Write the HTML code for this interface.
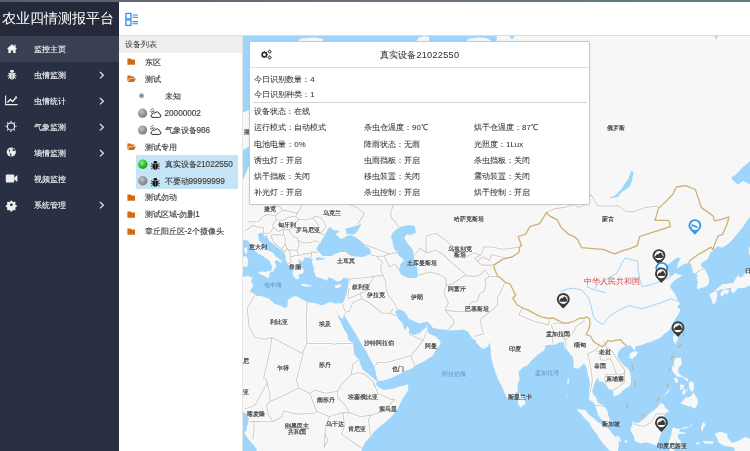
<!DOCTYPE html>
<html><head><meta charset="utf-8">
<style>
*{margin:0;padding:0;box-sizing:border-box}
html,body{width:750px;height:451px;overflow:hidden;background:#fff;font-family:"Liberation Sans",sans-serif}
.abs{position:absolute}
#topline{left:0;top:0;width:750px;height:2px;background:linear-gradient(90deg,#585e6c,#6b7380 50%,#627b82)}
#side{left:0;top:2px;width:119px;height:449px;background:#2a3043}
#brand{left:0;top:2px;width:119px;height:34px;background:#252a3a;color:#fff;font-size:14.2px;line-height:33.4px;padding-left:2px;white-space:nowrap}
.mi{position:absolute;left:0;width:119px;height:26px;color:#f4f4f8;font-size:8px;line-height:26px;-webkit-text-stroke:0.12px #f4f4f8}
.mi .t{position:absolute;left:34px;top:0.5px}
.mi svg{position:absolute;left:0;top:0}
.mi.act{background:#3a4054}
#header{left:119px;top:2px;width:631px;height:34px;background:#fff;border-bottom:1px solid #dcdcdc}
#tree{left:119px;top:36px;width:124px;height:415px;background:#fff;border-right:1px solid #e6e6e6}
#treeh{left:119px;top:36px;width:123px;height:17px;background:#eeeeee;color:#333;font-size:7.8px;line-height:17px;padding-left:6px}
.tr{position:absolute;height:17px;line-height:17px;font-size:8.2px;color:#404040;white-space:nowrap;-webkit-text-stroke:0.15px #404040}
.tr.hi{top:0}
#map{left:243px;top:36px;width:507px;height:415px;background:#f7f7f7;overflow:hidden}
#pop{left:249px;top:41px;width:341px;height:164px;background:#fff;border:1px solid #c9c9c9;border-radius:2px;box-shadow:0 0 2px rgba(0,0,0,.08)}
.pt{position:absolute;font-size:7.9px;color:#333;white-space:nowrap;line-height:10px;-webkit-text-stroke:0.05px #333}
.ico{position:absolute}
</style></head>
<body>
<div id="root" style="position:absolute;left:0;top:0;width:750px;height:451px;will-change:transform">
<div id="topline" class="abs"></div>
<div id="side" class="abs"></div>
<div class="abs" style="left:113px;top:36px;width:6px;height:415px;background:#263040"></div>
<div id="brand" class="abs">农业四情测报平台</div>
<div class="mi act" style="top:36px">
<svg width="30" height="26" viewBox="0 0 30 26"><path d="M7.2,12.6L12,8.2L16.8,12.6L15.8,13.6L15.6,13.4V17H13.2V14.6H10.8V17H8.4V13.4L8.2,13.6Z" fill="#f2f2f2"/><rect x="14.2" y="8.8" width="1.4" height="2.6" fill="#f2f2f2"/></svg>
<span class="t">监控主页</span></div>
<div class="mi" style="top:62px">
<svg width="30" height="26" viewBox="0 0 30 26"><ellipse cx="12" cy="9.3" rx="2" ry="1.5" fill="#eee"/><path d="M9.3,11h5.4v3.5a2.7,3 0 0 1-5.4,0Z" fill="#eee"/><path d="M8.2,11.2L9.6,12M15.8,11.2L14.4,12M7.6,13.6H9.4M16.4,13.6H14.6M8,16.4L9.6,15.2M16,16.4L14.4,15.2" stroke="#eee" stroke-width="1"/><path d="M12,11.3V17.2" stroke="#2a3043" stroke-width="0.6"/></svg>
<span class="t">虫情监测</span><svg width="119" height="26" viewBox="0 0 119 26"><path d="M100,10L103.4,13.2L100,16.4" fill="none" stroke="#e0e0e6" stroke-width="1.3"/></svg></div>
<div class="mi" style="top:88px">
<svg width="30" height="26" viewBox="0 0 30 26"><path d="M5.6,7.4V16.6H17.6" fill="none" stroke="#e8e8e8" stroke-width="1.1"/><path d="M7.4,14.6L10.4,11.4L12.6,13.4L16.4,9.2" fill="none" stroke="#eee" stroke-width="1.4"/><path d="M14.8,8.6H17V10.8Z" fill="#eee"/></svg>
<span class="t">虫情统计</span><svg width="119" height="26" viewBox="0 0 119 26"><path d="M100,10L103.4,13.2L100,16.4" fill="none" stroke="#e0e0e6" stroke-width="1.3"/></svg></div>
<div class="mi" style="top:114px">
<svg width="30" height="26" viewBox="0 0 30 26"><circle cx="11" cy="12.4" r="3.6" fill="none" stroke="#eee" stroke-width="1.2"/><path d="M11,6.9V8M11,16.8V17.9M5.5,12.4H6.6M15.4,12.4H16.5M7.1,8.5L7.9,9.3M14.1,15.5L14.9,16.3M7.1,16.3L7.9,15.5M14.1,9.3L14.9,8.5" stroke="#eee" stroke-width="1.2"/></svg>
<span class="t">气象监测</span><svg width="119" height="26" viewBox="0 0 119 26"><path d="M100,10L103.4,13.2L100,16.4" fill="none" stroke="#e0e0e6" stroke-width="1.3"/></svg></div>
<div class="mi" style="top:140px">
<svg width="30" height="26" viewBox="0 0 30 26"><circle cx="11.3" cy="12" r="4.6" fill="#eee"/><path d="M8.6,9.6C10,9 10.6,10.6 9.8,11.4C9,12.2 10.6,13.4 11.4,14.2C12,15 11.4,16.4 10.6,16.5M12.6,8C13.6,9 14.8,9.4 15.4,10.6C14.4,11 13.2,10.6 12.8,11.6" fill="#2a3043"/></svg>
<span class="t">墒情监测</span><svg width="119" height="26" viewBox="0 0 119 26"><path d="M100,10L103.4,13.2L100,16.4" fill="none" stroke="#e0e0e6" stroke-width="1.3"/></svg></div>
<div class="mi" style="top:166px">
<svg width="30" height="26" viewBox="0 0 30 26"><rect x="5.8" y="8.6" width="8.4" height="7.8" rx="1" fill="#eee"/><path d="M14.2,11.4L17.4,9V16L14.2,13.6Z" fill="#eee"/></svg>
<span class="t">视频监控</span></div>
<div class="mi" style="top:192px">
<svg width="30" height="26" viewBox="0 0 30 26"><g transform="translate(11.3,12.8) scale(0.86)"><path d="M-1,-4.8h2l0.4,1.3l1.2,0.5l1.2,-0.7l1.4,1.4l-0.7,1.2l0.5,1.2l1.3,0.4v2l-1.3,0.4l-0.5,1.2l0.7,1.2l-1.4,1.4l-1.2,-0.7l-1.2,0.5l-0.4,1.3h-2l-0.4,-1.3l-1.2,-0.5l-1.2,0.7l-1.4,-1.4l0.7,-1.2l-0.5,-1.2l-1.3,-0.4v-2l1.3,-0.4l0.5,-1.2l-0.7,-1.2l1.4,-1.4l1.2,0.7l1.2,-0.5Z" fill="#eee"/><circle r="1.6" fill="#2a3043"/></g></svg>
<span class="t">系统管理</span><svg width="119" height="26" viewBox="0 0 119 26"><path d="M100,10L103.4,13.2L100,16.4" fill="none" stroke="#e0e0e6" stroke-width="1.3"/></svg></div>

<div id="header" class="abs"></div>
<svg class="ico" style="left:124px;top:11px" width="16" height="16" viewBox="0 0 16 16"><rect x="1.9" y="2.4" width="5" height="5.4" fill="none" stroke="#3d8ded" stroke-width="1.3"/><rect x="1.9" y="9" width="5" height="5.4" fill="none" stroke="#3d8ded" stroke-width="1.3"/><path d="M8.4,4H14M8.4,6.2H14M8.4,10.6H14M8.4,12.8H14" stroke="#3d8ded" stroke-width="1.1"/></svg>

<div id="tree" class="abs"></div>
<div id="treeh" class="abs">设备列表</div>
<svg class="ico" style="left:119px;top:53px" width="124" height="190" viewBox="0 0 124 190">
<defs>
<radialGradient id="gg" cx="40%" cy="35%" r="65%"><stop offset="0" stop-color="#c4c4c4"/><stop offset="0.7" stop-color="#8e8e8e"/><stop offset="1" stop-color="#7a7a7a"/></radialGradient>
<radialGradient id="gr" cx="40%" cy="35%" r="65%"><stop offset="0" stop-color="#8ff08f"/><stop offset="0.6" stop-color="#2fc12f"/><stop offset="1" stop-color="#1f9a1f"/></radialGradient>
<radialGradient id="gm" cx="50%" cy="50%" r="50%"><stop offset="0" stop-color="#546a78"/><stop offset="0.6" stop-color="#9ab4c8"/><stop offset="1" stop-color="#dfe8ef"/></radialGradient>
<g id="fc"><path d="M8.4,5.6H11.6L12.6,6.6H16V11.8H8.4Z" fill="#d46a12"/></g>
<g id="fo"><path d="M8.4,5.6H11.6L12.6,6.6H15.2V8H10.4L8.4,11.4Z" fill="#d46a12"/><path d="M10.8,8.6H17L15,12H8.8Z" fill="#d46a12"/></g>
<g id="cl" fill="none" stroke="#1a1a1a" stroke-width="0.9"><path d="M32,5.2L32.7,6M33.9,4.2V5.2M31.2,7.3H32.2"/><path d="M32.6,8.6a1.9,1.9 0 0 1 3-1.3"/><path d="M33,13.4H40.2a1.6,1.6 0 0 0 0.2-3.2a2.4,2.4 0 0 0-4.6-0.9a1.7,1.7 0 0 0-2.8,1.2a1.5,1.5 0 0 0 0.2,2.9Z"/></g>
<g id="bug"><ellipse cx="36.3" cy="7.3" rx="1.8" ry="1.3" fill="#111"/><path d="M33.8,8.8h5v3.2a2.5,2.8 0 0 1-5,0Z" fill="#111"/><path d="M32.2,8.6L33.8,9.6M40.4,8.6L38.8,9.6M31.8,11.2H33.8M40.8,11.2H38.8M32.2,14L33.8,12.8M40.4,14L38.8,12.8" stroke="#111" stroke-width="0.9"/><path d="M36.3,9V14.3" stroke="#d0d0d0" stroke-width="0.5"/></g>
</defs>
<use href="#fc" y="0"/>
<use href="#fo" y="17"/>
<circle cx="22.6" cy="42.8" r="3" fill="url(#gm)"/>
<circle cx="23.6" cy="60.2" r="4.6" fill="url(#gg)"/><use href="#cl" y="51"/>
<circle cx="23.6" cy="77" r="4.6" fill="url(#gg)"/><use href="#cl" y="68"/>
<use href="#fo" y="85"/>
<rect x="17" y="102" width="102" height="34" fill="#c5e4f5"/>
<circle cx="23.8" cy="111.2" r="4.7" fill="url(#gr)"/><use href="#bug" y="102"/>
<circle cx="23.8" cy="127.7" r="4.7" fill="url(#gg)"/><use href="#bug" y="119"/>
<use href="#fc" y="136"/>
<use href="#fc" y="153"/>
<use href="#fc" y="170"/>
</svg>
<div class="tr" style="left:144.5px;top:54px">东区</div>
<div class="tr" style="left:144.5px;top:70.5px">测试</div>
<div class="tr" style="left:164.5px;top:87.5px">未知</div>
<div class="tr" style="left:164.5px;top:104.5px">20000002</div>
<div class="tr" style="left:164.5px;top:121.5px">气象设备986</div>
<div class="tr" style="left:144.5px;top:138.5px">测试专用</div>
<div class="tr" style="left:164.5px;top:155.5px">真实设备21022550</div>
<div class="tr" style="left:164.5px;top:172.5px">不要动99999999</div>
<div class="tr" style="left:144.5px;top:188.7px">测试勿动</div>
<div class="tr" style="left:144.5px;top:205.6px">测试区域-勿删1</div>
<div class="tr" style="left:144.5px;top:223.2px">章丘阳丘区-2个摄像头</div>

<div id="map" class="abs"><svg width="507" height="415" viewBox="0 0 507 415" style="position:absolute;left:0;top:0" font-family="Liberation Sans">
<rect width="507" height="415" fill="#f7f7f7"/>
<g fill="#9fd5fb" stroke="none">
<path d="M118.4,425.2L118.8,412.0L120.4,409.9L121.9,406.6L125.0,403.2L127.3,400.8L131.1,395.8L136.9,390.5L141.9,386.6L148.5,380.8L154.2,373.7L159.2,363.4L163.1,357.6L165.4,354.1L165.0,348.6L156.9,350.5L150.4,352.5L140.8,354.1L135.4,350.9L133.4,349.3L132.3,348.6L134.2,345.8L131.9,343.8L125.4,337.9L119.6,333.5L118.1,329.9L115.7,323.9L110.7,317.4L110.7,311.6L109.6,307.5L105.0,303.3L104.6,299.1L100.7,292.8L97.7,285.5L95.7,282.0L92.9,273.6L93.8,277.6L99.4,283.3L100.7,279.8L102.3,275.4L101.5,279.8L104.2,284.2L108.1,290.6L113.4,299.1L118.1,307.5L123.4,315.7L127.7,323.9L131.1,329.9L132.7,335.9L133.8,341.9L135.0,345.0L140.8,344.6L148.5,341.9L156.5,337.9L161.9,335.1L168.5,333.1L173.5,328.7L175.4,327.9L181.2,325.5L185.4,322.6L190.0,319.8L192.7,313.7L196.6,309.5L197.7,305.4L193.1,300.8L185.8,297.4L184.4,294.5L184.2,288.9L183.1,291.5L180.4,293.6L176.9,297.0L171.5,298.7L167.7,299.1L165.8,297.0L166.2,293.6L164.6,290.0L163.1,292.8L162.3,294.9L160.4,290.6L160.4,288.5L158.5,286.3L154.6,282.0L152.7,277.6L152.3,275.8L154.2,273.6L156.2,273.2L161.2,275.4L163.1,278.0L165.8,282.8L171.5,285.5L177.3,287.6L181.2,286.3L184.2,285.5L187.3,288.5L190.0,292.1L196.6,293.2L200.8,293.6L207.3,294.5L216.2,294.0L220.4,293.6L225.0,295.7L227.7,300.0L230.4,303.3L231.6,304.1L233.1,305.0L233.0,306.6L235.4,309.1L238.5,312.0L240.8,312.8L244.7,310.8L247.0,306.2L247.3,311.2L247.9,314.1L247.9,319.8L249.7,327.9L251.6,333.9L255.4,344.2L259.3,350.7L261.0,355.6L263.7,361.5L266.0,363.1L268.3,360.3L272.0,358.4L274.9,354.4L274.7,348.2L276.6,343.4L275.6,335.9L278.5,332.7L280.1,331.1L284.3,329.5L288.1,325.1L294.3,319.0L297.8,316.5L301.2,314.5L302.4,309.5L307.0,308.7L312.0,308.7L316.2,306.6L320.8,306.2L321.6,310.0L325.1,315.3L330.1,321.8L330.9,329.9L330.1,331.9L335.1,332.7L338.2,329.9L340.9,327.9L343.2,329.9L344.7,337.9L347.0,346.2L346.6,355.6L345.9,363.4L351.2,367.3L353.6,373.5L355.1,378.9L357.8,382.7L361.1,385.8L365.9,388.9L367.8,389.3L368.9,388.5L367.4,385.1L365.3,379.7L364.3,373.9L361.1,370.4L357.4,367.7L354.7,366.5L353.2,361.5L349.7,357.6L349.3,353.7L352.2,345.8L354.3,342.1L355.9,343.4L355.9,345.4L358.9,345.4L362.4,347.8L363.9,350.1L365.9,353.3L369.7,354.1L370.9,361.1L377.4,357.6L379.7,354.4L383.6,352.1L387.0,349.7L387.8,346.8L388.0,340.7L386.6,335.1L384.1,331.5L381.6,329.9L377.8,325.9L374.5,321.0L375.1,316.5L378.2,312.4L383.2,309.5L387.4,309.5L389.7,312.0L391.6,314.9L392.4,310.8L396.7,309.5L401.7,307.9L404.3,306.6L407.0,306.2L412.0,304.1L416.7,302.1L422.0,297.4L426.7,294.0L428.0,290.6L430.1,286.3L432.8,282.0L435.1,278.9L436.7,275.4L437.4,273.2L434.0,271.4L436.9,267.4L434.7,264.2L432.8,259.6L428.6,253.2L427.1,251.3L427.8,248.5L430.9,245.1L435.5,241.8L439.7,238.9L434.7,238.2L432.2,237.0L429.0,239.9L426.3,240.4L426.3,237.0L421.7,234.5L420.5,231.1L423.6,229.6L427.8,226.6L432.8,222.5L434.0,221.5L437.8,222.5L435.1,227.1L434.0,232.5L435.9,231.6L440.1,228.6L445.9,226.8L448.2,228.6L449.4,232.5L449.8,237.4L451.3,236.5L454.8,238.7L453.6,241.8L454.8,246.1L454.0,251.5L454.4,253.2L459.0,251.8L464.0,250.1L465.5,248.0L466.1,245.6L465.5,240.8L463.8,237.2L461.5,233.0L458.0,230.3L458.6,227.1L464.8,223.1L467.1,216.9L470.1,214.3L475.2,210.1L479.0,211.7L485.2,208.0L490.2,202.7L494.8,197.2L499.4,191.7L503.2,186.0L506.3,181.4L544.8,181.4L544.8,425.2Z"/>
<path d="M-13.2,203.7L1.8,203.7L5.3,204.8L7.2,208.0L8.0,211.2L13.0,215.4L14.9,217.4L19.9,220.0L22.2,222.0L24.6,223.1L27.2,226.1L29.2,231.1L27.8,235.5L29.6,236.5L31.1,233.5L33.4,230.6L31.5,225.6L33.8,223.8L38.2,227.1L38.8,225.3L36.7,223.1L32.6,220.5L29.9,216.4L22.2,213.3L19.5,207.5L16.1,204.8L14.9,197.8L20.5,196.4L21.1,201.0L23.0,198.3L26.5,205.4L30.7,208.0L37.2,212.5L41.1,215.4L42.4,219.5L42.6,223.8L44.6,227.6L47.3,231.1L51.1,234.5L49.6,235.5L49.6,237.9L51.1,241.3L54.2,243.7L55.3,241.8L56.9,243.5L55.3,238.4L60.0,237.7L60.7,233.5L56.1,229.6L55.7,223.1L59.6,226.1L61.5,221.5L67.3,221.8L70.0,224.1L68.8,225.6L69.6,228.6L71.9,234.0L70.0,232.5L73.0,240.8L76.1,241.8L79.6,242.8L83.8,244.7L85.7,241.3L90.7,243.2L93.8,245.6L97.7,244.7L100.7,241.8L106.9,242.8L105.4,248.0L104.2,255.5L102.3,260.6L101.5,263.7L99.6,266.9L91.9,267.6L86.9,266.0L82.7,267.8L78.8,269.6L72.3,267.1L64.4,266.2L60.0,263.7L54.6,260.8L51.5,260.1L44.8,263.7L44.6,269.8L43.0,271.4L40.7,271.8L37.6,269.6L31.5,267.8L25.7,262.4L18.4,260.1L14.2,260.1L9.5,256.4L6.5,255.5L9.2,251.8L10.1,248.0L8.4,246.6L8.4,243.7L10.1,240.4L7.2,241.8L5.7,239.4L1.5,240.8L-13.2,240.8Z"/>
<path d="M85.7,191.7L81.9,198.9L77.8,205.4L75.0,209.6L73.4,213.3L79.6,220.0L88.4,220.0L91.9,217.9L97.5,216.0L102.9,215.9L107.3,219.5L111.9,220.5L120.4,221.0L127.7,217.9L127.9,215.1L125.4,210.7L120.4,207.5L113.1,201.6L108.4,198.9L103.8,200.0L98.4,203.2L96.5,202.1L92.7,198.0L96.9,195.0L90.7,193.9L88.8,192.8L86.9,191.1Z"/>
<path d="M108.4,198.3L103.8,198.3L102.3,192.8L111.9,190.3L118.4,187.7L115.0,194.5L111.9,198.3Z"/>
<path d="M151.5,195.0L156.9,191.1L165.8,188.9L171.9,190.0L172.7,196.7L167.7,198.9L163.8,198.3L161.2,202.1L164.6,207.5L169.6,213.3L170.8,218.5L171.5,226.1L173.9,231.1L175.0,239.4L173.5,241.8L165.8,242.3L158.5,238.9L155.8,234.0L157.3,228.6L161.2,224.1L156.5,220.0L153.1,215.9L150.4,210.7L149.6,205.4L148.1,201.6L149.2,197.2Z"/>
<path d="M-13.2,373.1L1.5,376.6L4.2,378.9L5.7,382.7L5.3,386.6L4.2,390.5L3.4,394.3L1.3,396.6L3.0,400.1L6.1,403.9L9.5,407.8L13.4,412.8L15.7,425.2L-13.2,425.2Z"/>
<path d="M73.4,221.3L82.7,222.3L79.6,223.8L72.7,224.3Z"/>
<path d="M0.0,-6.0L250.0,-6.0L250.0,5.5L0.0,5.5Z"/>
<path d="M249.0,0.0L254.0,0.0L253.5,5.5L249.0,5.5Z"/>
<path d="M266.0,0.0L272.0,0.0L269.0,3.5Z"/>
<path d="M0.0,0.0L8.0,0.0L8.0,73.0L0.0,76.5Z"/>
<path d="M0.0,114.0L8.0,109.5L8.0,124.0L5.0,132.0L0.0,144.0Z"/>
<path d="M468.0,-6.0L477.0,-6.0L473.5,3.5Z"/>
</g>
<g fill="#f7f7f7">
<path d="M54.0,5.5L58.0,2.5L65.0,2.0L72.0,1.5L80.0,3.0L80.0,5.5Z"/>
<path d="M173.0,5.5L176.0,1.5L181.0,0.0L186.0,1.0L186.0,5.5Z"/>
<path d="M223.0,5.5L226.0,2.5L235.0,1.5L243.0,2.0L250.0,5.5Z"/>
<path d="M471.5,255.3L473.2,253.2L476.7,250.3L479.4,248.0L484.0,248.0L487.8,247.0L489.0,248.0L491.3,245.1L493.6,241.3L495.9,238.4L495.9,241.8L499.4,240.8L502.7,236.5L507.1,233.5L508.6,226.1L509.4,220.0L511.3,218.5L514.0,236.0L510.2,250.3L505.6,249.9L503.2,250.8L501.7,252.2L499.4,251.8L495.5,252.2L494.4,252.2L494.0,253.6L490.2,257.6L487.5,254.1L488.6,252.2L487.8,251.8L481.3,253.2L477.3,253.4L474.4,255.3Z"/>
<path d="M471.3,255.3L469.4,256.9L467.5,257.3L466.3,258.7L467.3,260.8L468.6,263.7L470.1,268.7L472.1,266.9L473.4,264.7L474.0,258.7L474.4,256.9Z"/>
<path d="M485.5,254.1L485.9,255.9L484.0,258.5L481.3,257.3L479.4,260.8L477.1,258.3L478.2,255.7L481.3,253.6Z"/>
<path d="M506.3,218.5L505.6,213.3L507.9,209.1L513.6,197.2L525.6,205.4L517.9,215.9Z"/>
<path d="M435.1,293.6L436.5,297.0L434.7,303.3L432.6,307.9L430.5,305.4L429.9,301.2L432.1,297.0L433.2,294.5Z"/>
<path d="M392.8,315.3L394.7,316.1L393.2,319.8L389.0,323.0L385.9,321.4L387.0,317.4L389.7,315.7Z"/>
<path d="M432.8,321.8L437.8,321.8L439.0,327.9L435.5,331.9L435.1,335.9L438.6,339.9L445.1,343.0L445.1,345.4L442.8,344.2L440.9,341.9L436.7,340.7L434.0,340.7L431.7,337.9L430.5,336.7L429.0,333.9L429.0,330.3L430.7,330.7L430.9,325.5Z"/>
<path d="M430.5,341.9L434.4,341.9L435.1,346.6L433.2,347.0Z"/>
<path d="M445.9,345.4L450.1,345.8L451.3,351.7L449.4,355.6L447.4,355.2L445.9,350.5Z"/>
<path d="M437.1,348.2L441.7,349.3L439.0,353.7L437.1,353.7Z"/>
<path d="M440.9,351.7L442.4,353.7L441.7,358.7L438.6,357.6L440.1,354.4Z"/>
<path d="M444.8,350.9L442.4,357.6L444.4,354.8Z"/>
<path d="M427.8,350.5L425.1,356.4L419.4,361.5L418.6,362.2L422.0,358.4L425.5,354.1Z"/>
<path d="M450.5,356.4L454.8,363.4L454.8,367.3L453.2,371.2L450.1,372.7L449.0,370.8L444.8,370.0L437.1,367.3L440.5,364.2L442.4,361.5L446.7,361.1L448.6,359.5Z"/>
<path d="M417.4,367.3L414.4,371.2L410.1,375.0L406.3,377.4L402.4,382.0L396.3,386.2L392.0,388.1L389.3,388.5L387.4,394.3L390.9,400.1L392.0,405.5L397.8,407.4L402.4,406.2L408.2,407.8L414.0,410.1L415.9,403.9L417.4,399.3L419.7,392.4L425.1,390.5L421.7,386.6L421.3,378.1L426.3,375.0L422.0,371.2L420.5,367.7Z"/>
<path d="M334.3,372.7L342.8,374.3L346.2,378.9L350.5,382.0L355.5,386.6L362.0,390.1L367.0,394.3L369.7,398.1L375.1,403.9L375.9,407.4L374.7,417.4L370.1,417.4L365.1,413.2L361.3,408.9L355.9,402.0L353.7,398.1L349.3,392.4L346.2,386.6L342.0,382.7L337.8,377.4L334.3,374.3Z"/>
<path d="M372.4,400.1L376.3,400.5L378.6,405.9L374.7,404.3Z"/>
<path d="M381.6,404.3L384.3,404.7L384.0,406.6L381.6,406.6Z"/>
<path d="M449.4,388.9L446.7,390.8L442.8,392.8L433.2,392.4L430.1,391.2L428.6,394.3L428.6,397.8L425.1,407.8L427.1,415.5L430.9,415.5L433.2,404.3L435.1,409.7L437.1,413.6L440.9,411.6L438.2,405.9L434.7,401.2L435.1,398.1L442.1,397.8L442.4,396.6L436.3,395.8L437.1,392.4L446.7,390.5L448.6,388.1Z"/>
<path d="M460.1,385.8L462.8,388.5L460.1,392.4L459.8,396.2L457.8,392.4L458.6,389.7Z"/>
<path d="M471.7,397.8L477.5,395.8L484.0,397.8L484.8,402.0L489.0,407.0L496.7,404.3L502.5,400.8L506.3,402.8L544.8,402.8L544.8,425.2L494.8,425.2L490.9,411.6L481.3,409.7L475.5,406.6L474.8,403.5Z"/>
<path d="M460.1,405.1L470.9,405.5L469.8,407.8L461.3,407.4Z"/>
<path d="M452.4,406.2L457.1,406.6L454.8,408.9Z"/>
<path d="M325.1,341.5L326.0,345.4L324.7,349.7L324.3,345.8Z"/>
<path d="M324.5,358.4L325.5,359.5L324.7,361.1Z"/>
<path d="M276.2,356.4L280.4,361.5L282.8,367.3L277.7,371.6L274.9,368.1L275.1,361.5Z"/>
<path d="M27.6,234.7L25.7,242.3L22.4,240.6L16.1,237.7L15.7,236.0L19.2,235.5L21.5,236.0L26.1,234.8Z"/>
<path d="M3.0,220.0L5.3,223.6L4.5,230.6L0.3,231.1L-0.8,221.0Z"/>
<path d="M3.8,210.7L4.3,215.9L3.0,219.0L0.7,213.3Z"/>
<path d="M58.4,247.5L61.9,248.0L65.7,248.9L68.8,249.4L68.0,250.3L63.0,250.6L58.0,249.4Z"/>
<path d="M100.7,247.0L98.0,248.5L98.0,250.6L94.2,252.2L91.9,251.3L91.9,249.4L94.6,248.7L97.3,248.5Z"/>
</g>
<g fill="#9fd5fb">
<path d="M366.6,162.3L375.1,161.1L377.4,157.3L387.0,150.3L389.0,144.4L390.5,137.1L389.0,134.4L387.8,135.7L385.5,142.5L380.9,149.0L378.6,152.9L373.6,158.0L371.1,160.1L367.4,161.1Z"/>
<path d="M510.2,149.7L500.5,145.1L494.8,148.4L490.2,144.4L488.2,141.8L492.9,138.4L499.4,131.6L510.2,122.5Z"/>
</g>
<g fill="none" stroke="#9fd5fb" stroke-width="1">
<path d="M317.3,255.7L323.0,253.5L329.7,252.1L338.6,253.9L345.7,261.9L348.3,270.7L350.1,279.6L353.7,284.9L359.9,288.5L367.0,279.6L375.8,274.3L385.8,269.5L399.0,272.9L412.5,268.4L420.0,266.0L428.0,262.9L437.0,266.0"/>
<path d="M343.0,250.3L351.0,253.9L362.5,256.6"/>
<path d="M351.0,253.0L357.0,246.0L365.2,242.4L374.0,237.0L379.4,226.4L382.0,222.0L385.8,222.9L394.7,225.0L395.0,234.0L397.0,244.0L399.2,250.6L405.0,249.5L412.5,247.3L420.0,244.5L428.0,240.6"/>
</g>
<path d="M1.8,195.0L6.8,191.7L9.9,189.4L15.7,191.1L20.3,191.7L20.7,196.7M4.5,186.0L15.7,185.5L20.7,179.7L25.3,178.5L32.6,179.7L33.0,184.3L29.6,189.4L30.3,191.7L26.5,197.2L19.9,197.2M14.5,169.6L24.6,165.4L30.7,169.6L36.9,170.8L39.9,174.4L44.6,175.0L54.2,177.4L60.0,168.4L58.4,161.7M32.6,179.7L34.9,177.4L39.9,174.4M34.2,184.3L39.9,184.3L45.3,181.4L52.6,180.3L54.2,177.4M52.6,180.3L55.7,183.2L49.2,191.7L45.7,193.9L39.9,193.4L35.3,195.6L30.3,191.1M28.0,198.9L40.7,198.9L42.6,203.7L41.9,208.0L38.8,212.8L35.3,210.7L30.3,205.4L28.4,201.0L28.0,198.9M39.9,193.4L40.7,198.9M45.7,193.9L49.9,200.0L54.2,202.1L54.9,204.3L56.1,209.6L53.8,214.3M41.9,208.0L44.6,213.3L48.4,214.3L53.8,214.3M38.8,212.8L41.9,215.9L43.8,212.8L46.9,215.4L47.3,221.0L48.4,226.1L44.9,228.1M47.3,221.0L52.3,219.5L55.7,219.5L61.9,217.9L67.6,217.4L68.8,217.4L68.0,222.0M53.8,214.3L55.7,219.5M54.9,204.3L60.0,207.0L67.6,206.4L72.7,204.8L77.7,207.0M67.6,215.9L73.4,216.4L75.3,215.9M55.7,183.2L63.4,183.8L70.0,182.0L75.3,188.9L76.1,197.2L81.9,198.9M70.0,182.0L71.5,180.3L77.3,181.4L81.1,186.0L83.0,191.1L77.3,197.2M58.4,161.7L67.6,162.3L77.3,159.8L85.0,162.9L90.0,158.6L98.0,157.3L106.1,168.4L113.8,171.4L121.5,177.4L116.9,184.9L114.6,188.3M148.5,139.8L147.7,159.2L150.4,168.4L147.7,177.4L148.5,182.0L152.3,186.0L156.2,191.7M121.5,208.5L133.1,212.8L146.5,217.9L154.6,216.4M127.3,218.5L133.8,220.5L135.8,223.1L140.0,226.6L137.7,229.6L138.1,234.5L140.0,239.4L130.8,240.4L121.5,241.8L113.8,242.3L108.4,242.8L105.7,245.6M133.8,220.5L140.8,220.0L146.5,217.9M140.8,220.0L143.8,225.1L146.5,231.1L151.9,227.6L155.8,234.0M140.0,239.4L142.7,245.6L143.1,253.2L145.4,259.6L151.1,266.5L154.2,273.2M130.8,240.4L126.9,247.5L125.4,253.2L116.9,257.8L118.8,262.8L127.3,267.8L139.6,277.2L146.5,277.2L153.8,279.8M146.5,277.2L150.4,272.7M116.9,257.8L105.4,262.8L104.6,261.0M106.1,252.2L105.4,258.3L103.0,259.6M118.8,262.8L110.0,266.5L106.1,275.4L102.3,276.3M99.4,267.4L101.9,275.4M132.3,330.3L134.6,326.3L142.7,326.7L167.7,319.8L171.9,329.5M167.7,319.8L180.0,304.6L166.2,298.3M180.0,304.6L182.3,299.1L184.2,294.5M171.2,219.5L177.3,212.2L183.1,216.9L183.1,200.0L193.1,197.2L204.3,205.4L206.2,207.5L224.3,220.5L231.2,216.4L237.0,219.5L240.0,214.8L240.8,210.7L250.4,211.2L260.0,213.3L276.2,211.2M175.0,239.4L186.9,236.0L196.6,238.4L203.1,242.8L203.1,249.4M203.1,249.4L210.0,247.5L216.2,243.2L220.0,240.4L223.5,239.4M183.1,216.9L192.7,214.3L200.4,218.5L208.1,226.1L215.8,232.5L223.5,239.4M203.1,249.4L200.8,257.3L205.4,266.9L201.9,274.1M201.9,274.1L211.9,275.4L222.7,275.8L228.1,266.5L234.3,264.7L237.0,257.3L241.2,255.0L243.1,248.0L241.6,243.2L246.6,240.8L255.8,240.4M223.5,239.4L228.5,240.4L235.0,239.9L238.1,237.9L242.0,234.0L246.6,240.8M250.8,229.1L238.9,229.1L234.3,225.1L240.0,221.0L246.6,224.6L248.5,218.5L254.3,220.0L262.0,222.0L269.3,221.0M234.3,225.1L231.6,222.0L237.0,219.5M201.9,274.1L210.8,284.2L210.8,288.0L204.6,294.0M262.0,246.1L258.1,255.0L254.3,261.9L254.7,268.7L250.0,273.2L238.9,282.0L237.0,286.3L240.8,297.8L231.6,300.4M279.3,271.8L275.8,278.9L290.4,285.0L305.5,288.9L306.6,282.4M310.1,287.2L321.6,287.2M308.1,288.5L310.1,294.0L309.3,301.2L310.1,307.5M322.4,295.3L319.7,300.8L322.4,304.1L322.8,310.0L322.8,312.8M322.4,304.1L329.3,297.8L333.2,290.6L341.6,284.2M356.6,309.1L352.8,314.1L344.7,317.8L346.6,325.9L347.8,331.9L349.3,343.8L348.2,351.7L347.0,355.6M352.8,314.1L357.0,317.4L357.4,323.9L362.4,324.3L367.4,322.6L370.5,329.9L373.6,338.3L363.9,338.3L361.6,342.3L362.4,347.8M360.9,305.4L363.9,311.6L369.7,315.7L372.8,321.4L377.4,327.9L381.6,333.9L381.6,337.1L381.6,345.8L377.0,349.7L374.3,352.1L369.7,354.1M373.6,338.3L377.4,339.1L381.6,337.1M352.0,369.6L356.2,369.2L360.5,370.8M421.3,378.1L413.2,377.7L408.2,386.6L400.5,390.5L393.2,388.9L389.3,386.6M303.7,176.3L312.0,172.6L321.6,171.4L331.2,168.4L335.1,171.4L342.8,168.4L348.2,158.6L354.3,169.6L363.9,170.2L375.1,169.6L383.2,175.6L390.9,175.6L402.4,171.4L414.0,170.2L415.5,172.4M452.8,237.4L456.3,234.5L461.3,233.0M64.2,266.0L63.4,277.6L63.8,307.5L88.4,307.5L90.7,308.3L95.4,307.5L109.6,307.5M63.8,307.5L60.0,315.7L60.0,317.8L28.8,301.6L21.5,303.3L11.9,301.2L6.1,290.6L4.2,272.3L11.9,258.7M60.0,317.8L56.1,333.1L53.4,343.8L55.7,352.1L40.7,359.5L27.2,365.4M28.8,301.6L27.2,313.7L20.7,341.9L23.4,343.8L26.5,355.6L27.2,365.4M55.7,352.1L66.9,357.6L71.5,354.1L83.0,357.2L94.6,355.2L98.8,347.8L108.1,338.7L110.0,327.9L116.1,323.9M108.1,338.7L113.8,336.7L121.5,337.9L130.4,345.8L132.7,351.7L135.0,357.6L148.1,363.4L151.9,363.4L140.8,375.0L128.8,378.9L125.4,383.5L127.7,400.5M132.7,351.7L131.1,349.7L130.4,345.8M128.8,378.9L117.7,380.8L106.1,376.6L102.3,369.2L94.6,361.5L94.6,355.2M106.1,376.6L100.0,376.6L101.5,390.5L98.4,398.1L118.4,412.0M100.0,376.6L94.6,378.1L86.5,380.8L83.0,388.5L81.9,398.1L81.1,411.6M86.5,380.8L73.4,375.0L73.0,377.0L54.2,378.1L40.7,375.0L38.8,380.8L29.9,385.8L18.8,385.8L11.1,385.4L5.3,385.8M66.9,357.6L73.4,375.0M27.2,365.4L23.4,369.2L25.3,378.9L29.9,385.8M23.4,343.8L23.8,347.8L19.5,355.6L11.9,369.2L2.2,373.1M11.1,385.8L11.1,390.5L9.9,403.9M81.9,398.1L85.0,403.9L81.1,411.6" fill="none" stroke="#ffffff" stroke-width="2.4" stroke-linejoin="round"/>
<path d="M1.8,195.0L6.8,191.7L9.9,189.4L15.7,191.1L20.3,191.7L20.7,196.7M4.5,186.0L15.7,185.5L20.7,179.7L25.3,178.5L32.6,179.7L33.0,184.3L29.6,189.4L30.3,191.7L26.5,197.2L19.9,197.2M14.5,169.6L24.6,165.4L30.7,169.6L36.9,170.8L39.9,174.4L44.6,175.0L54.2,177.4L60.0,168.4L58.4,161.7M32.6,179.7L34.9,177.4L39.9,174.4M34.2,184.3L39.9,184.3L45.3,181.4L52.6,180.3L54.2,177.4M52.6,180.3L55.7,183.2L49.2,191.7L45.7,193.9L39.9,193.4L35.3,195.6L30.3,191.1M28.0,198.9L40.7,198.9L42.6,203.7L41.9,208.0L38.8,212.8L35.3,210.7L30.3,205.4L28.4,201.0L28.0,198.9M39.9,193.4L40.7,198.9M45.7,193.9L49.9,200.0L54.2,202.1L54.9,204.3L56.1,209.6L53.8,214.3M41.9,208.0L44.6,213.3L48.4,214.3L53.8,214.3M38.8,212.8L41.9,215.9L43.8,212.8L46.9,215.4L47.3,221.0L48.4,226.1L44.9,228.1M47.3,221.0L52.3,219.5L55.7,219.5L61.9,217.9L67.6,217.4L68.8,217.4L68.0,222.0M53.8,214.3L55.7,219.5M54.9,204.3L60.0,207.0L67.6,206.4L72.7,204.8L77.7,207.0M67.6,215.9L73.4,216.4L75.3,215.9M55.7,183.2L63.4,183.8L70.0,182.0L75.3,188.9L76.1,197.2L81.9,198.9M70.0,182.0L71.5,180.3L77.3,181.4L81.1,186.0L83.0,191.1L77.3,197.2M58.4,161.7L67.6,162.3L77.3,159.8L85.0,162.9L90.0,158.6L98.0,157.3L106.1,168.4L113.8,171.4L121.5,177.4L116.9,184.9L114.6,188.3M148.5,139.8L147.7,159.2L150.4,168.4L147.7,177.4L148.5,182.0L152.3,186.0L156.2,191.7M121.5,208.5L133.1,212.8L146.5,217.9L154.6,216.4M127.3,218.5L133.8,220.5L135.8,223.1L140.0,226.6L137.7,229.6L138.1,234.5L140.0,239.4L130.8,240.4L121.5,241.8L113.8,242.3L108.4,242.8L105.7,245.6M133.8,220.5L140.8,220.0L146.5,217.9M140.8,220.0L143.8,225.1L146.5,231.1L151.9,227.6L155.8,234.0M140.0,239.4L142.7,245.6L143.1,253.2L145.4,259.6L151.1,266.5L154.2,273.2M130.8,240.4L126.9,247.5L125.4,253.2L116.9,257.8L118.8,262.8L127.3,267.8L139.6,277.2L146.5,277.2L153.8,279.8M146.5,277.2L150.4,272.7M116.9,257.8L105.4,262.8L104.6,261.0M106.1,252.2L105.4,258.3L103.0,259.6M118.8,262.8L110.0,266.5L106.1,275.4L102.3,276.3M99.4,267.4L101.9,275.4M132.3,330.3L134.6,326.3L142.7,326.7L167.7,319.8L171.9,329.5M167.7,319.8L180.0,304.6L166.2,298.3M180.0,304.6L182.3,299.1L184.2,294.5M171.2,219.5L177.3,212.2L183.1,216.9L183.1,200.0L193.1,197.2L204.3,205.4L206.2,207.5L224.3,220.5L231.2,216.4L237.0,219.5L240.0,214.8L240.8,210.7L250.4,211.2L260.0,213.3L276.2,211.2M175.0,239.4L186.9,236.0L196.6,238.4L203.1,242.8L203.1,249.4M203.1,249.4L210.0,247.5L216.2,243.2L220.0,240.4L223.5,239.4M183.1,216.9L192.7,214.3L200.4,218.5L208.1,226.1L215.8,232.5L223.5,239.4M203.1,249.4L200.8,257.3L205.4,266.9L201.9,274.1M201.9,274.1L211.9,275.4L222.7,275.8L228.1,266.5L234.3,264.7L237.0,257.3L241.2,255.0L243.1,248.0L241.6,243.2L246.6,240.8L255.8,240.4M223.5,239.4L228.5,240.4L235.0,239.9L238.1,237.9L242.0,234.0L246.6,240.8M250.8,229.1L238.9,229.1L234.3,225.1L240.0,221.0L246.6,224.6L248.5,218.5L254.3,220.0L262.0,222.0L269.3,221.0M234.3,225.1L231.6,222.0L237.0,219.5M201.9,274.1L210.8,284.2L210.8,288.0L204.6,294.0M262.0,246.1L258.1,255.0L254.3,261.9L254.7,268.7L250.0,273.2L238.9,282.0L237.0,286.3L240.8,297.8L231.6,300.4M279.3,271.8L275.8,278.9L290.4,285.0L305.5,288.9L306.6,282.4M310.1,287.2L321.6,287.2M308.1,288.5L310.1,294.0L309.3,301.2L310.1,307.5M322.4,295.3L319.7,300.8L322.4,304.1L322.8,310.0L322.8,312.8M322.4,304.1L329.3,297.8L333.2,290.6L341.6,284.2M356.6,309.1L352.8,314.1L344.7,317.8L346.6,325.9L347.8,331.9L349.3,343.8L348.2,351.7L347.0,355.6M352.8,314.1L357.0,317.4L357.4,323.9L362.4,324.3L367.4,322.6L370.5,329.9L373.6,338.3L363.9,338.3L361.6,342.3L362.4,347.8M360.9,305.4L363.9,311.6L369.7,315.7L372.8,321.4L377.4,327.9L381.6,333.9L381.6,337.1L381.6,345.8L377.0,349.7L374.3,352.1L369.7,354.1M373.6,338.3L377.4,339.1L381.6,337.1M352.0,369.6L356.2,369.2L360.5,370.8M421.3,378.1L413.2,377.7L408.2,386.6L400.5,390.5L393.2,388.9L389.3,386.6M303.7,176.3L312.0,172.6L321.6,171.4L331.2,168.4L335.1,171.4L342.8,168.4L348.2,158.6L354.3,169.6L363.9,170.2L375.1,169.6L383.2,175.6L390.9,175.6L402.4,171.4L414.0,170.2L415.5,172.4M452.8,237.4L456.3,234.5L461.3,233.0M64.2,266.0L63.4,277.6L63.8,307.5L88.4,307.5L90.7,308.3L95.4,307.5L109.6,307.5M63.8,307.5L60.0,315.7L60.0,317.8L28.8,301.6L21.5,303.3L11.9,301.2L6.1,290.6L4.2,272.3L11.9,258.7M60.0,317.8L56.1,333.1L53.4,343.8L55.7,352.1L40.7,359.5L27.2,365.4M28.8,301.6L27.2,313.7L20.7,341.9L23.4,343.8L26.5,355.6L27.2,365.4M55.7,352.1L66.9,357.6L71.5,354.1L83.0,357.2L94.6,355.2L98.8,347.8L108.1,338.7L110.0,327.9L116.1,323.9M108.1,338.7L113.8,336.7L121.5,337.9L130.4,345.8L132.7,351.7L135.0,357.6L148.1,363.4L151.9,363.4L140.8,375.0L128.8,378.9L125.4,383.5L127.7,400.5M132.7,351.7L131.1,349.7L130.4,345.8M128.8,378.9L117.7,380.8L106.1,376.6L102.3,369.2L94.6,361.5L94.6,355.2M106.1,376.6L100.0,376.6L101.5,390.5L98.4,398.1L118.4,412.0M100.0,376.6L94.6,378.1L86.5,380.8L83.0,388.5L81.9,398.1L81.1,411.6M86.5,380.8L73.4,375.0L73.0,377.0L54.2,378.1L40.7,375.0L38.8,380.8L29.9,385.8L18.8,385.8L11.1,385.4L5.3,385.8M66.9,357.6L73.4,375.0M27.2,365.4L23.4,369.2L25.3,378.9L29.9,385.8M23.4,343.8L23.8,347.8L19.5,355.6L11.9,369.2L2.2,373.1M11.1,385.8L11.1,390.5L9.9,403.9M81.9,398.1L85.0,403.9L81.1,411.6" fill="none" stroke="#d2cec6" stroke-width="1.1" stroke-linejoin="round"/>
<g fill="none" stroke="#cdb173" stroke-width="1.3" stroke-linejoin="round">
<path d="M256.2,240.8L254.7,240.4L251.6,233.0L250.8,229.1L255.4,226.1L259.3,223.6L263.9,222.0L269.3,221.0L276.2,215.9L276.2,211.2L278.5,209.6L275.1,200.5L282.4,198.3L287.0,190.6L296.6,187.7L303.7,176.3L306.2,179.7L314.3,183.8L317.8,191.1L325.5,198.3L331.2,200.5L334.7,203.7L338.5,211.7L352.4,212.8L360.1,213.3L371.6,217.9L380.5,214.3L386.3,212.8L394.3,209.6L396.7,200.5L410.1,196.1L427.4,190.6L425.9,184.3L412.0,184.3L415.5,172.4L421.7,166.6L430.1,158.0L433.2,151.0L442.8,149.7L452.4,153.5L458.2,171.4L469.8,179.7L471.7,184.9L479.4,183.2L485.9,180.9L484.4,187.2L479.8,198.3L475.2,200.0L472.5,205.9L470.1,213.3L467.8,211.2L460.1,215.9L454.4,219.0L447.1,224.6L445.9,226.8"/>
<path d="M383.2,309.5L379.3,306.2L377.8,303.7L373.6,304.1L367.8,305.4L364.7,304.6L362.4,308.3L359.3,310.8L356.6,309.1L353.2,307.5L350.1,305.0L347.4,300.0L343.2,298.7L345.5,293.6L347.0,288.5L346.6,282.8L343.2,280.7L341.2,282.4L337.0,282.0L331.2,285.0L325.1,287.2L320.5,287.2L310.1,282.0L306.6,282.4L300.5,281.5L294.7,279.4L285.1,274.1L279.3,271.8L273.9,268.7L269.7,261.9L272.7,259.6L269.7,253.2L267.0,248.0L262.0,246.1L256.2,240.8"/>
<path d="M440.7,296.8L440.7,300.6"/>
<path d="M438.0,308.0L435.0,312.0"/>
<path d="M430.0,319.5L428.0,324.0"/>
<path d="M426.8,331.0L426.4,335.5"/>
<path d="M425.5,347.0L424.3,351.5"/>
<path d="M416.5,361.5L413.5,365.3"/>
<path d="M402.0,378.0L398.0,381.0"/>
<path d="M384.5,367.0L384.0,372.0"/>
<path d="M392.5,345.0L391.5,350.0"/>
<path d="M389.0,329.0L390.0,334.0"/>
</g>
<g fill="#3a3a3a" stroke="#3a3a3a" stroke-width="0.18" font-size="5.5" text-anchor="middle">
<text x="27.3" y="175.0">捷克</text>
<text x="88.7" y="179.3">乌克兰</text>
<text x="44.0" y="191.3">匈牙利</text>
<text x="64.7" y="196.4">罗马尼亚</text>
<text x="14.7" y="212.7">意大利</text>
<text x="103.0" y="227.3">土耳其</text>
<text x="178.5" y="228.7">土库曼斯坦</text>
<text x="118.3" y="253.0">叙利亚</text>
<text x="133.0" y="261.3">伊拉克</text>
<text x="174.3" y="263.3">伊朗</text>
<text x="225.7" y="185.3">哈萨克斯坦</text>
<text x="217.0" y="215.3">乌兹别克</text>
<text x="217.0" y="220.7">斯坦</text>
<text x="365.0" y="184.7">蒙古</text>
<text x="35.5" y="288.0">利比亚</text>
<text x="82.4" y="289.7">埃及</text>
<text x="82.4" y="331.4">苏丹</text>
<text x="40.0" y="334.0">乍得</text>
<text x="12.6" y="380.0">喀麦隆</text>
<text x="54.0" y="391.6">刚果民主</text>
<text x="54.0" y="398.0">共和国</text>
<text x="82.6" y="365.6">南苏丹</text>
<text x="91.6" y="390.0">乌干达</text>
<text x="135.5" y="308.5">沙特阿拉伯</text>
<text x="188.4" y="312.0">阿曼</text>
<text x="154.6" y="335.3">也门</text>
<text x="120.2" y="362.6">埃塞俄比亚</text>
<text x="144.5" y="375.1">索马里</text>
<text x="114.0" y="395.2">肯尼亚</text>
<text x="52.0" y="232.5">希腊</text>
<text x="504.5" y="237.0">日</text>
<text x="2.5" y="327.0">尼</text>
<text x="2.5" y="358.4">亚</text>
<text x="214.3" y="255.4">阿富汗</text>
<text x="234.3" y="275.0">巴基斯坦</text>
<text x="272.0" y="314.5">印度</text>
<text x="315.2" y="299.5">孟加拉国</text>
<text x="277.0" y="363.0">斯里兰卡</text>
<text x="336.9" y="311.1">缅甸</text>
<text x="362.0" y="318.0">老挝</text>
<text x="356.8" y="332.0">泰国</text>
<text x="372.4" y="344.9">柬埔寨</text>
<text x="368.0" y="390.0">新加坡</text>
<text x="429.0" y="411.5">印度尼西亚</text>
<text x="373.0" y="94.2">俄罗斯</text>
<text x="3.5" y="98.0">挪</text>
</g>
<g fill="#5b8fc6" font-size="5.7" text-anchor="middle">
<text x="30.0" y="251.0">地中海</text>
<text x="211.0" y="340.0">阿拉伯海</text>
<text x="304.0" y="339.2">孟加拉湾</text>
</g>
<text x="368.6" y="248.0" fill="#d2424a" font-size="7.8" text-anchor="middle">中华人民共和国</text>
<g transform="translate(416.0,219.6)"><path d="M-6.4,0A6.4,6.4 0 1 1 6.4,0C6.4,3.4 3.2,5.6 0,9.2C-3.2,5.6 -6.4,3.4 -6.4,0Z" fill="#3a3a3a"/><circle r="4.5" fill="#fff"/>
<circle cx="1.4" cy="-1.3" r="1.5" fill="#3a3a3a"/><path d="M1.4,-3.9V-3.3M3.6,-2.9L3.2,-2.5M4,-1.3H3.5M-0.8,-2.9L-0.4,-2.5" stroke="#3a3a3a" stroke-width="0.6"/><path d="M-3.2,2.3H2.6a1.5,1.5 0 0 0 0.1-3a2,2 0 0 0-3.6-0.4a1.5,1.5 0 0 0-2.2,1.3a1.1,1.1 0 0 0 -0.1,2.1Z" fill="#3a3a3a"/>
</g>
<g transform="translate(418.8,232.3)"><path d="M-6.4,0A6.4,6.4 0 1 1 6.4,0C6.4,3.4 3.2,5.6 0,9.2C-3.2,5.6 -6.4,3.4 -6.4,0Z" fill="#3896e6"/><circle r="4.5" fill="#fff"/>
<path d="M-3,-1.6L2.8,0.9L2,2.5L-3.6,0Z" fill="#3896e6"/><path d="M-3.2,0.6V2.8M2.6,1.6L3.4,2.6" stroke="#3896e6" stroke-width="0.8"/>
</g>
<g transform="translate(418.4,237.8)"><path d="M-6.4,0A6.4,6.4 0 1 1 6.4,0C6.4,3.4 3.2,5.6 0,9.2C-3.2,5.6 -6.4,3.4 -6.4,0Z" fill="#3a3a3a"/><circle r="4.5" fill="#fff"/>
<circle cx="1.4" cy="-1.3" r="1.5" fill="#3a3a3a"/><path d="M1.4,-3.9V-3.3M3.6,-2.9L3.2,-2.5M4,-1.3H3.5M-0.8,-2.9L-0.4,-2.5" stroke="#3a3a3a" stroke-width="0.6"/><path d="M-3.2,2.3H2.6a1.5,1.5 0 0 0 0.1-3a2,2 0 0 0-3.6-0.4a1.5,1.5 0 0 0-2.2,1.3a1.1,1.1 0 0 0 -0.1,2.1Z" fill="#3a3a3a"/>
</g>
<g transform="translate(320.3,263.4)"><path d="M-6.4,0A6.4,6.4 0 1 1 6.4,0C6.4,3.4 3.2,5.6 0,9.2C-3.2,5.6 -6.4,3.4 -6.4,0Z" fill="#3a3a3a"/><circle r="4.5" fill="#fff"/>
<circle cx="1.4" cy="-1.3" r="1.5" fill="#3a3a3a"/><path d="M1.4,-3.9V-3.3M3.6,-2.9L3.2,-2.5M4,-1.3H3.5M-0.8,-2.9L-0.4,-2.5" stroke="#3a3a3a" stroke-width="0.6"/><path d="M-3.2,2.3H2.6a1.5,1.5 0 0 0 0.1-3a2,2 0 0 0-3.6-0.4a1.5,1.5 0 0 0-2.2,1.3a1.1,1.1 0 0 0 -0.1,2.1Z" fill="#3a3a3a"/>
</g>
<g transform="translate(435.0,291.7)"><path d="M-6.4,0A6.4,6.4 0 1 1 6.4,0C6.4,3.4 3.2,5.6 0,9.2C-3.2,5.6 -6.4,3.4 -6.4,0Z" fill="#3a3a3a"/><circle r="4.5" fill="#fff"/>
<circle cx="1.4" cy="-1.3" r="1.5" fill="#3a3a3a"/><path d="M1.4,-3.9V-3.3M3.6,-2.9L3.2,-2.5M4,-1.3H3.5M-0.8,-2.9L-0.4,-2.5" stroke="#3a3a3a" stroke-width="0.6"/><path d="M-3.2,2.3H2.6a1.5,1.5 0 0 0 0.1-3a2,2 0 0 0-3.6-0.4a1.5,1.5 0 0 0-2.2,1.3a1.1,1.1 0 0 0 -0.1,2.1Z" fill="#3a3a3a"/>
</g>
<g transform="translate(418.4,386.7)"><path d="M-6.4,0A6.4,6.4 0 1 1 6.4,0C6.4,3.4 3.2,5.6 0,9.2C-3.2,5.6 -6.4,3.4 -6.4,0Z" fill="#3a3a3a"/><circle r="4.5" fill="#fff"/>
<circle cx="1.4" cy="-1.3" r="1.5" fill="#3a3a3a"/><path d="M1.4,-3.9V-3.3M3.6,-2.9L3.2,-2.5M4,-1.3H3.5M-0.8,-2.9L-0.4,-2.5" stroke="#3a3a3a" stroke-width="0.6"/><path d="M-3.2,2.3H2.6a1.5,1.5 0 0 0 0.1-3a2,2 0 0 0-3.6-0.4a1.5,1.5 0 0 0-2.2,1.3a1.1,1.1 0 0 0 -0.1,2.1Z" fill="#3a3a3a"/>
</g>
<g transform="translate(451.9,189.6)"><path d="M-6.4,0A6.4,6.4 0 1 1 6.4,0C6.4,3.4 3.2,5.6 0,9.2C-3.2,5.6 -6.4,3.4 -6.4,0Z" fill="#3896e6"/><circle r="4.5" fill="#fff"/>
<path d="M-3,-1.6L2.8,0.9L2,2.5L-3.6,0Z" fill="#3896e6"/><path d="M-3.2,0.6V2.8M2.6,1.6L3.4,2.6" stroke="#3896e6" stroke-width="0.8"/>
</g>
</svg></div>

<div id="pop" class="abs"></div>
<svg class="ico" style="left:258px;top:47px" width="16" height="16" viewBox="0 0 16 16">
<g fill="none" stroke="#2a2a2a">
<circle cx="6.4" cy="7.7" r="2.2" stroke-width="1.5"/>
<path d="M6.4,4.3V5M6.4,10.4V11.1M3,7.7H3.7M9.1,7.7H9.8M4,5.3L4.5,5.8M8.3,9.6L8.8,10.1M4,10.1L4.5,9.6M8.3,5.8L8.8,5.3" stroke-width="1.3"/>
<circle cx="11.6" cy="4.6" r="1.2" stroke-width="1"/>
<path d="M11.6,2.6V3.1M11.6,6.1V6.6M9.6,4.6H10.1M13.1,4.6H13.6" stroke-width="0.9"/>
<circle cx="11.6" cy="10.5" r="1.2" stroke-width="1"/>
<path d="M11.6,8.5V9M11.6,12V12.5M9.6,10.5H10.1M13.1,10.5H13.6" stroke-width="0.9"/>
</g></svg>
<div class="pt" style="left:380.4px;top:50.2px;font-size:9.1px;line-height:10px">真实设备<span style="letter-spacing:0.3px">21022550</span></div>
<div class="abs" style="left:250px;top:67px;width:339px;height:1px;background:#dedede"></div>
<div class="pt" style="left:254.3px;top:75.1px">今日识别数量：4</div>
<div class="pt" style="left:254.3px;top:89.6px">今日识别种类：1</div>
<div class="abs" style="left:252.5px;top:102px;width:334px;height:1px;background:#d6d6d6"></div>
<div class="pt" style="left:254.3px;top:107.3px">设备状态：在线</div>
<div class="pt" style="left:254.3px;top:123.3px">运行模式：自动模式</div>
<div class="pt" style="left:364px;top:123.3px">杀虫仓温度：90℃</div>
<div class="pt" style="left:474px;top:123.3px">烘干仓温度：87℃</div>
<div class="pt" style="left:254.3px;top:139.5px">电池电量：0%</div>
<div class="pt" style="left:364px;top:139.5px">降雨状态：无雨</div>
<div class="pt" style="left:474px;top:139.5px">光照度：1Lux</div>
<div class="pt" style="left:254.3px;top:155.7px">诱虫灯：开启</div>
<div class="pt" style="left:364px;top:155.7px">虫雨挡板：开启</div>
<div class="pt" style="left:474px;top:155.7px">杀虫挡板：关闭</div>
<div class="pt" style="left:254.3px;top:172.2px">烘干挡板：关闭</div>
<div class="pt" style="left:364px;top:172.2px">移虫装置：关闭</div>
<div class="pt" style="left:474px;top:172.2px">震动装置：关闭</div>
<div class="pt" style="left:254.3px;top:188.3px">补光灯：开启</div>
<div class="pt" style="left:364px;top:188.3px">杀虫控制：开启</div>
<div class="pt" style="left:474px;top:188.3px">烘干控制：开启</div>
</div>
</body></html>
